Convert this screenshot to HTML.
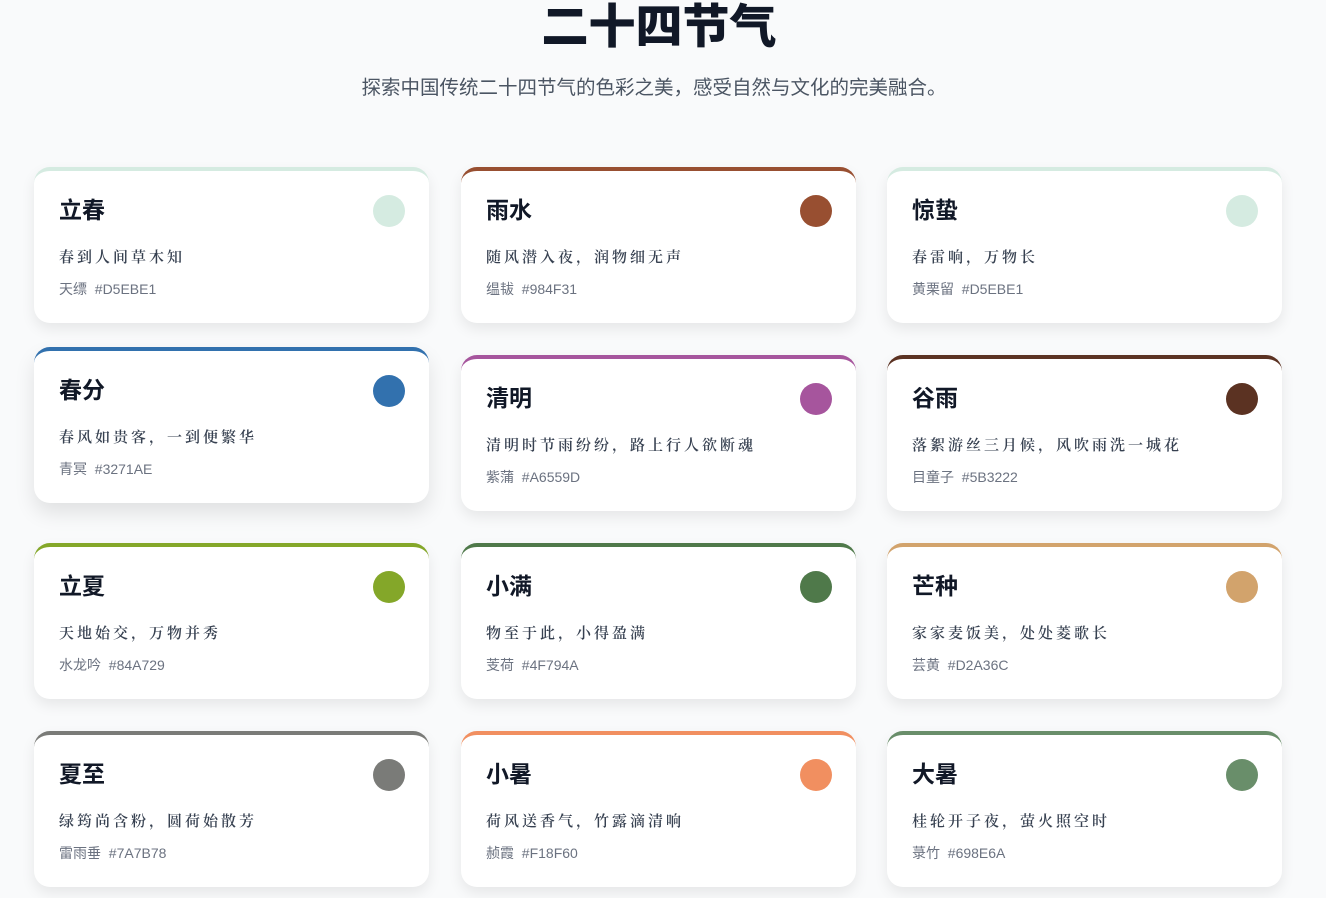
<!DOCTYPE html>
<html><head><meta charset="utf-8"><style>
body{margin:0;width:1326px;height:898px;overflow:hidden;background:#f9fafb;font-family:"Liberation Sans","Noto Sans CJK SC",sans-serif;}
h1{position:absolute;top:-9px;left:0;width:1318px;text-align:center;margin:0;font-size:47px;font-weight:900;color:#111827;line-height:72px;}
.sub{position:absolute;top:75px;left:0;width:1308px;text-align:center;font-size:19.5px;color:#4b5563;line-height:26px;}
.card{position:absolute;width:395px;height:152px;background:#fff;border-radius:16px;border-top:4px solid;box-shadow:0 6px 14px rgba(0,0,0,.08);box-sizing:content-box;}
.t{position:absolute;left:25px;top:23px;font-size:23px;font-weight:700;color:#111827;line-height:32px;}
.c{position:absolute;right:24px;top:24px;width:32px;height:32px;border-radius:50%;}
.p{position:absolute;left:25px;top:76px;font-family:"Noto Serif CJK SC",serif;font-size:15px;font-weight:600;letter-spacing:3px;color:#374151;line-height:20px;}
.m{position:absolute;left:25px;top:108px;font-size:14px;color:#6b7280;line-height:20px;}
</style></head><body>
<h1>二十四节气</h1>
<div class="sub">探索中国传统二十四节气的色彩之美，感受自然与文化的完美融合。</div>

<div class="card" style="left:34px;top:167px;border-color:#D5EBE1"><div class="t">立春</div><div class="c" style="background:#D5EBE1"></div><div class="p">春到人间草木知</div><div class="m">天缥&nbsp;&nbsp;#D5EBE1</div></div>
<div class="card" style="left:461px;top:167px;border-color:#984F31"><div class="t">雨水</div><div class="c" style="background:#984F31"></div><div class="p">随风潜入夜，润物细无声</div><div class="m">缊韨&nbsp;&nbsp;#984F31</div></div>
<div class="card" style="left:887px;top:167px;border-color:#D5EBE1"><div class="t">惊蛰</div><div class="c" style="background:#D5EBE1"></div><div class="p">春雷响，万物长</div><div class="m">黄栗留&nbsp;&nbsp;#D5EBE1</div></div>

<div class="card" style="left:34px;top:347px;border-color:#3271AE;box-shadow:0 10px 20px rgba(0,0,0,.1)"><div class="t">春分</div><div class="c" style="background:#3271AE"></div><div class="p">春风如贵客，一到便繁华</div><div class="m">青冥&nbsp;&nbsp;#3271AE</div></div>
<div class="card" style="left:461px;top:355px;border-color:#A6559D"><div class="t">清明</div><div class="c" style="background:#A6559D"></div><div class="p">清明时节雨纷纷，路上行人欲断魂</div><div class="m">紫蒲&nbsp;&nbsp;#A6559D</div></div>
<div class="card" style="left:887px;top:355px;border-color:#5B3222"><div class="t">谷雨</div><div class="c" style="background:#5B3222"></div><div class="p">落絮游丝三月候，风吹雨洗一城花</div><div class="m">目童子&nbsp;&nbsp;#5B3222</div></div>

<div class="card" style="left:34px;top:543px;border-color:#84A729"><div class="t">立夏</div><div class="c" style="background:#84A729"></div><div class="p">天地始交，万物并秀</div><div class="m">水龙吟&nbsp;&nbsp;#84A729</div></div>
<div class="card" style="left:461px;top:543px;border-color:#4F794A"><div class="t">小满</div><div class="c" style="background:#4F794A"></div><div class="p">物至于此，小得盈满</div><div class="m">芰荷&nbsp;&nbsp;#4F794A</div></div>
<div class="card" style="left:887px;top:543px;border-color:#D2A36C"><div class="t">芒种</div><div class="c" style="background:#D2A36C"></div><div class="p">家家麦饭美，处处菱歌长</div><div class="m">芸黄&nbsp;&nbsp;#D2A36C</div></div>

<div class="card" style="left:34px;top:731px;border-color:#7A7B78"><div class="t">夏至</div><div class="c" style="background:#7A7B78"></div><div class="p">绿筠尚含粉，圆荷始散芳</div><div class="m">雷雨垂&nbsp;&nbsp;#7A7B78</div></div>
<div class="card" style="left:461px;top:731px;border-color:#F18F60"><div class="t">小暑</div><div class="c" style="background:#F18F60"></div><div class="p">荷风送香气，竹露滴清响</div><div class="m">赪霞&nbsp;&nbsp;#F18F60</div></div>
<div class="card" style="left:887px;top:731px;border-color:#698E6A"><div class="t">大暑</div><div class="c" style="background:#698E6A"></div><div class="p">桂轮开子夜，萤火照空时</div><div class="m">菉竹&nbsp;&nbsp;#698E6A</div></div>
</body></html>
